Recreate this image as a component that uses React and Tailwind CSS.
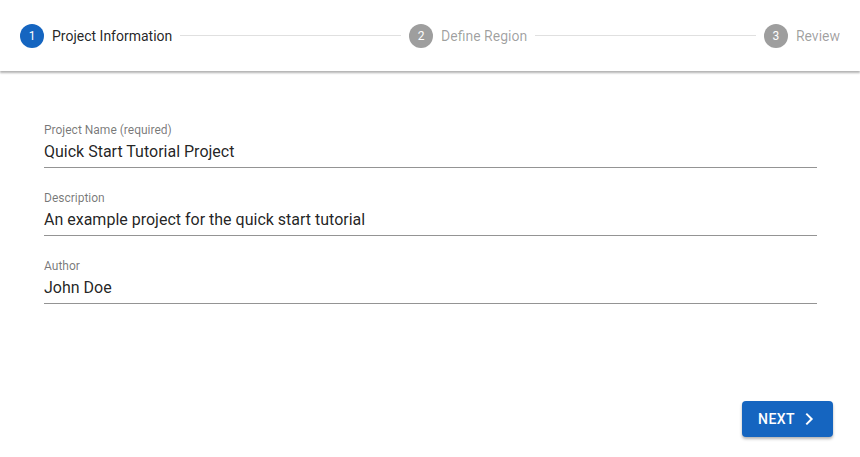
import React from "react";

function Step({ n, label, active }) {
  return (
    <div className="flex items-center shrink-0">
      <div
        className={
          "w-6 h-6 rounded-full flex items-center justify-center text-[12px] text-white " +
          (active ? "bg-[#1565c0]" : "bg-[#9e9e9e]")
        }
      >
        {n}
      </div>
      <span
        className={
          "ml-2 text-[14px] leading-5 " +
          (active ? "text-[rgba(0,0,0,0.87)]" : "text-[rgba(0,0,0,0.38)]")
        }
      >
        {label}
      </span>
    </div>
  );
}

function Connector() {
  return <div className="flex-1 mx-2 h-px bg-[#e0e0e0]" />;
}

function Field({ label, value }) {
  return (
    <div className="flex flex-col">
      <div className="text-[12px] leading-4 text-[rgba(0,0,0,0.54)]">{label}</div>
      <div className="mt-[3px] h-[27px] pb-[5px] flex items-center text-[16px] text-[rgba(0,0,0,0.87)] border-b border-[rgba(0,0,0,0.42)]">
        {value}
      </div>
    </div>
  );
}

export default function App() {
  return (
    <div
      className="w-[860px] h-[457px] bg-white flex flex-col overflow-hidden"
      style={{ fontFamily: "Roboto, 'Liberation Sans', sans-serif" }}
    >
      <div className="h-[71px] shrink-0 flex items-center px-5 bg-white shadow-[0_2px_2px_rgba(0,0,0,0.3)] relative z-10">
        <Step n={1} label="Project Information" active />
        <Connector />
        <Step n={2} label="Define Region" />
        <Connector />
        <Step n={3} label="Review" />
      </div>
      <div className="flex-1 flex flex-col pt-[51px] pl-[44px] pr-[43px] gap-[22px]">
        <Field label="Project Name (required)" value="Quick Start Tutorial Project" />
        <Field label="Description" value="An example project for the quick start tutorial" />
        <Field label="Author" value="John Doe" />
      </div>
      <div className="flex justify-end pr-[27px] pb-[20px]">
        <button className="w-[91px] h-9 rounded bg-[#1565c0] text-white text-[14px] font-medium tracking-[0.4px] flex items-center justify-center gap-[6px] shadow-[0_2px_3px_rgba(0,0,0,0.3)]">
          NEXT
          <svg width="16" height="16" viewBox="0 0 24 24" fill="none" stroke="white" strokeWidth="3" strokeLinecap="square">
            <path d="M9 5l7 7-7 7" />
          </svg>
        </button>
      </div>
    </div>
  );
}
